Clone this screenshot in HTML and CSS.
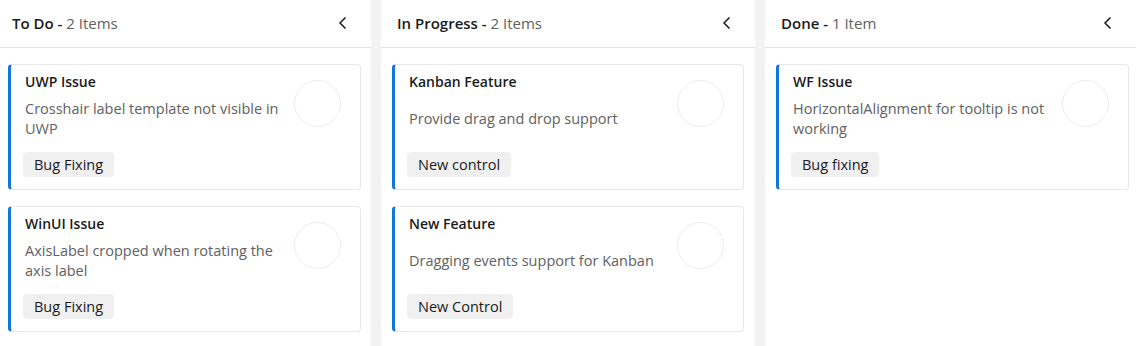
FILE: index.html
```html
<!DOCTYPE html>
<html lang="en">

<head>
    <meta charset="UTF-8">
    <meta name="viewport" content="width=device-width, initial-scale=1.0">
    <title>Kanban Board</title>
    <link rel="stylesheet" href="styles.css">
</head>

<body>

    <div class="board">

        <!-- To Do -->
        <section class="column column-first">
            <div class="column-header">
                <div class="column-title">To Do - <span class="title-count">2 Items</span></div>
                <button class="collapse" aria-label="Collapse">
                    <svg width="12" height="14" viewBox="0 0 12 14"><path d="M8.5 1.5 L3 7 L8.5 12.5" /></svg>
                </button>
            </div>
            <div class="cards">
                <div class="card">
                    <div class="card-body">
                        <div class="card-title">UWP Issue</div>
                        <div class="card-desc">Crosshair label template not visible in UWP</div>
                        <div class="card-tags"><span class="tag">Bug Fixing</span></div>
                    </div>
                    <div class="avatar"></div>
                </div>
                <div class="card">
                    <div class="card-body">
                        <div class="card-title">WinUI Issue</div>
                        <div class="card-desc">AxisLabel cropped when rotating the axis label</div>
                        <div class="card-tags"><span class="tag">Bug Fixing</span></div>
                    </div>
                    <div class="avatar"></div>
                </div>
            </div>
        </section>

        <!-- In Progress -->
        <section class="column">
            <div class="column-header">
                <div class="column-title">In Progress - <span class="title-count">2 Items</span></div>
                <button class="collapse" aria-label="Collapse">
                    <svg width="12" height="14" viewBox="0 0 12 14"><path d="M8.5 1.5 L3 7 L8.5 12.5" /></svg>
                </button>
            </div>
            <div class="cards">
                <div class="card">
                    <div class="card-body">
                        <div class="card-title">Kanban Feature</div>
                        <div class="card-desc">Provide drag and drop support</div>
                        <div class="card-tags"><span class="tag">New control</span></div>
                    </div>
                    <div class="avatar"></div>
                </div>
                <div class="card">
                    <div class="card-body">
                        <div class="card-title">New Feature</div>
                        <div class="card-desc">Dragging events support for Kanban</div>
                        <div class="card-tags"><span class="tag">New Control</span></div>
                    </div>
                    <div class="avatar"></div>
                </div>
            </div>
        </section>

        <!-- Done -->
        <section class="column column-last">
            <div class="column-header">
                <div class="column-title">Done - <span class="title-count">1 Item</span></div>
                <button class="collapse" aria-label="Collapse">
                    <svg width="12" height="14" viewBox="0 0 12 14"><path d="M8.5 1.5 L3 7 L8.5 12.5" /></svg>
                </button>
            </div>
            <div class="cards">
                <div class="card">
                    <div class="card-body">
                        <div class="card-title">WF Issue</div>
                        <div class="card-desc">HorizontalAlignment for tooltip is not working</div>
                        <div class="card-tags"><span class="tag">Bug fixing</span></div>
                    </div>
                    <div class="avatar"></div>
                </div>
            </div>
        </section>

    </div>

</body>

</html>
```

FILE: styles.css
```css
* {
    box-sizing: border-box;
    margin: 0;
    padding: 0;
}

body {
    font-family: "Open Sans", "Noto Sans", sans-serif;
    background-color: #f3f3f3;
    color: #1b1b1b;
    height: 346px;
    overflow: hidden;
}

.board {
    display: grid;
    grid-template-columns: 371px 374px 371px;
    column-gap: 10px;
    height: 346px;
}

.column {
    background-color: #ffffff;
}

.column-header {
    display: flex;
    align-items: center;
    justify-content: space-between;
    height: 48px;
    padding: 0 22px 2px 16px;
    border-bottom: 1px solid #e6e6e6;
}

.column-first .column-header {
    padding-left: 12px;
}

.column-title {
    font-size: 15px;
    font-weight: 600;
    color: #1b1b1b;
}

.title-count {
    font-weight: 400;
    color: #616161;
}

.collapse {
    display: flex;
    background: none;
    border: none;
}

.collapse path {
    fill: none;
    stroke: #1b1b1b;
    stroke-width: 1.5;
}

.cards {
    display: flex;
    flex-direction: column;
    gap: 16px;
    padding: 16px 11px;
}

.column-first .cards {
    padding: 16px 10px 16px 8px;
}

.column-last .cards {
    padding: 16px 7px 16px 11px;
}

.card {
    display: flex;
    height: 126px;
    padding: 7px 19px 12px 14px;
    border: 1px solid #e8e8e8;
    border-left: 3px solid #0f78d6;
    border-radius: 4px;
}

.card-body {
    flex: 1;
    min-width: 0;
}

.card-title {
    font-size: 14px;
    font-weight: 600;
    line-height: 20px;
}

.card-desc {
    display: flex;
    align-items: center;
    height: 40px;
    margin-top: 7px;
    font-size: 14.5px;
    line-height: 20px;
    color: #616161;
}

.card-tags {
    margin-top: 13px;
    margin-left: -2px;
}

.tag {
    display: inline-block;
    height: 25px;
    line-height: 26px;
    padding: 0 11px;
    border-radius: 4px;
    background-color: #f0f0f0;
    font-size: 14.5px;
}

.avatar {
    flex-shrink: 0;
    width: 47px;
    height: 47px;
    margin: 8px 0 0 8px;
    border: 1px solid #ededed;
    border-radius: 50%;
}
```
